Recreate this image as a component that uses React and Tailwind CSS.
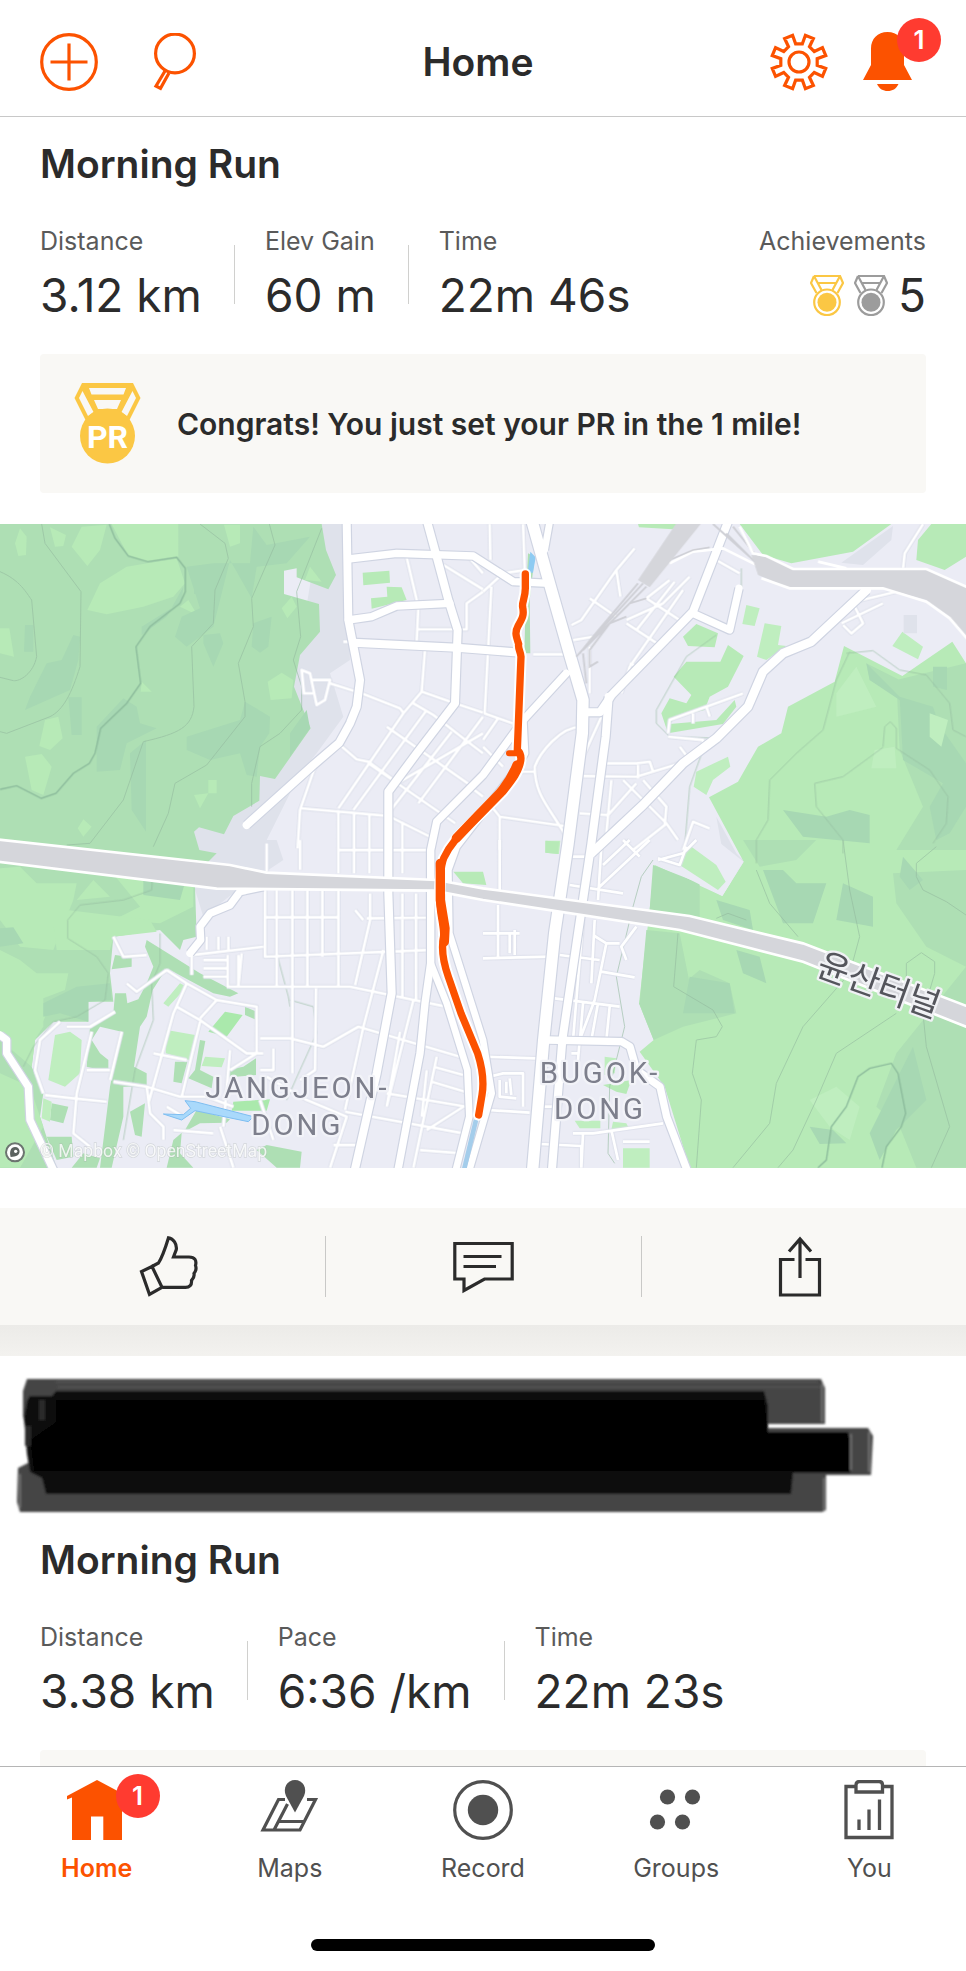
import React from "react";

/* ---------- icons ---------- */

const gearPoints = Array.from({ length: 8 }, (_, k) => {
  const a = 22.5 + 45 * k;
  return [
    [a - 12, 18.5],
    [a - 9, 27.5],
    [a + 9, 27.5],
    [a + 12, 18.5],
  ];
})
  .flat()
  .map(([deg, r]) => {
    const t = (deg * Math.PI) / 180;
    return `${(29 + r * Math.sin(t)).toFixed(2)},${(29 - r * Math.cos(t)).toFixed(2)}`;
  })
  .join(" ");

function PlusIcon() {
  return (
    <svg viewBox="0 0 58 58" className="size-[58px]" fill="none" stroke="currentColor" strokeWidth="3.200" aria-hidden="true">
      <circle cx="29" cy="29" r="27.3" />
      <path d="M29 10.500V47.500M10.500 29H47.500" />
    </svg>
  );
}

function SearchIcon() {
  return (
    <svg viewBox="0 0 58 58" className="size-[58px]" fill="none" stroke="currentColor" strokeWidth="3.200" aria-hidden="true">
      <circle cx="29" cy="20.500" r="19.400" />
      <path d="M19 38L10 53L14.500 55.300L23 40" />
    </svg>
  );
}

function GearIcon() {
  return (
    <svg viewBox="0 0 58 58" className="size-[58px]" fill="none" stroke="currentColor" strokeWidth="3.200" aria-hidden="true">
      <polygon points={gearPoints} />
      <circle cx="29" cy="29" r="10" />
    </svg>
  );
}

function BellIcon() {
  return (
    <svg viewBox="0 0 58 58" className="size-[58px] overflow-visible" fill="currentColor" aria-hidden="true">
      <path d="M29.500 -1C19.500 -1 13 6 13 15.500V32L5 47H54L46 32V15.500C46 6 39.500 -1 29.500 -1Z" />
      <path d="M19 51H40.500C38 56 34.500 58 29.700 58S21.500 56 19 51Z" />
    </svg>
  );
}

function SmallMedal() {
  return (
    <svg viewBox="0 0 34 41" className="h-[41px] w-[34px]" fill="none" stroke="currentColor" strokeWidth="2.200" aria-hidden="true">
      <path d="M4 1H30L33 8L27.500 18M4 1L1 8L6.500 18M4 1L11.500 15M30 1L22.500 15M7.500 8H26.500" />
      <circle cx="17" cy="27.300" r="12.800" />
      <circle cx="17" cy="27.300" r="9.500" fill="currentColor" stroke="none" />
    </svg>
  );
}

function PrMedal() {
  return (
    <svg viewBox="0 0 67 81" className="h-[81px] w-[67px] shrink-0" aria-label="PR medal">
      <path d="M8 0H59L66.500 15L54 40H13L0.500 15Z" fill="#fbc744" />
      <path d="M15 5H52L49.500 11.500H17.500ZM20 17H47L43 26H24ZM8.500 8L5 15L14 33L19.500 29ZM58.500 8L62 15L53 33L47.500 29Z" fill="#f9f8f5" />
      <circle cx="33.500" cy="53" r="27.500" fill="#fbc744" />
      <text x="33.500" y="65" textAnchor="middle" fontSize="32" fontWeight="700" fontFamily="'Liberation Sans Narrow', Roboto, sans-serif" fill="#fff">PR</text>
    </svg>
  );
}

function ThumbIcon() {
  return (
    <svg viewBox="0 0 60 61" className="h-[61px] w-[60px]" fill="none" stroke="currentColor" strokeWidth="3.200" aria-hidden="true">
      <path d="M14 30.500L20.500 27C25 20 28 10 30.500 1.800C35.500 2.500 39 8 38.300 13.500L35.500 21H51C57 21 58.800 24.500 57.500 29.500C58.500 32 57.500 35.500 56 37.500C56.500 40 55 43 53.500 44.500C54 49 51.500 51.300 47.500 51.300H24.500" />
      <path d="M14 30.500L3.500 35.500L11.500 58.500L24 51.300Z" />
    </svg>
  );
}

function CommentIcon() {
  return (
    <svg viewBox="0 0 61 61" className="size-[61px]" fill="none" stroke="currentColor" strokeWidth="3.200" aria-hidden="true">
      <path d="M1.800 7.500H59.200V43H31.500L11 54.500V43H1.800Z" />
      <path d="M10.500 20.500H48.500M10.500 30.500H43" />
    </svg>
  );
}

function ShareIcon() {
  return (
    <svg viewBox="0 0 60 61" className="h-[61px] w-[60px]" fill="none" stroke="currentColor" strokeWidth="3.200" aria-hidden="true">
      <path d="M24.500 23.500H10.500V59H49.500V23.500H35.500M30 3V42M19 15.500L30 3L41 15.500" />
    </svg>
  );
}

function HomeIcon() {
  return (
    <svg viewBox="0 0 60 60" className="size-[60px]" fill="currentColor" aria-hidden="true">
      <path d="M30 0L60 16V19.500L55 17.500V60H36.300V36.500H24V60H5V17.500L0 19.500V16Z" />
    </svg>
  );
}

function MapsIcon() {
  return (
    <svg viewBox="0 0 60 60" className="size-[60px]" fill="none" stroke="currentColor" strokeWidth="3.200" aria-hidden="true">
      <path d="M25 19.500H18.500L3 50H40L55.500 19.500H47M27.500 24L14 50M19 41.500H44" />
      <path d="M35 32.500L26 16C22.500 8 27 0 35 0S47.500 8 44 16Z" fill="currentColor" stroke="none" />
    </svg>
  );
}

function RecordIcon() {
  return (
    <svg viewBox="0 0 60 60" className="size-[60px]" aria-hidden="true">
      <circle cx="30" cy="30" r="28.300" fill="none" stroke="currentColor" strokeWidth="3.200" />
      <circle cx="30" cy="30" r="15.200" fill="currentColor" />
    </svg>
  );
}

function GroupsIcon() {
  return (
    <svg viewBox="0 0 60 60" className="size-[60px]" fill="currentColor" aria-hidden="true">
      <circle cx="21.500" cy="17" r="7.600" />
      <circle cx="46.500" cy="17" r="7.600" />
      <circle cx="11.500" cy="42" r="7.600" />
      <circle cx="36.500" cy="42" r="7.600" />
    </svg>
  );
}

function YouIcon() {
  return (
    <svg viewBox="0 0 60 60" className="size-[60px]" fill="none" stroke="currentColor" strokeWidth="3.300" aria-hidden="true">
      <path d="M16.500 6.500H7V57.500H53V6.500H43.500" />
      <path d="M17 12V5C17 2.500 18 1.500 20.500 1.500H40C42.500 1.500 43.500 2.500 43.500 5V12Z" />
      <path d="M20 39.500V50M30 29.500V50M40.500 19.500V50" />
    </svg>
  );
}

/* ---------- map ---------- */

const NW = "";
const NE = "translate(1449 0)";
const SW = "translate(0 960)";
const SE = "translate(1449 960)";

const MID = "#aedfb4";
const LIGHT = "#b7eab7";
const PALE = "#bfeebf";
const DARK = "#a7d8b3";
const SHADE = "#dfe2eb";

const areas = [
  [NW, SHADE, "M960 12H1030L1050 420L990 460L1030 590L950 700L900 760L800 960L600 990L560 900L760 700L880 500Z"],
  [SW, SHADE, "M560 0H830L850 60L700 160L610 230L570 100Z"],
  [NW, MID, "M0 12H965L978 90L1008 165L985 208L890 172V145L852 152V222L957 252L960 335L900 405L882 500L932 625L825 777L780 768L778 842L700 888L672 943L597 922L582 935L598 990L650 1000L610 1040L585 1100L590 1250L550 1260L540 1290L480 1230L340 1250L330 1360L340 1445H265V1505H160L105 1560L95 1640L130 1720L120 1790L170 1944H0Z"],
  [NW, LIGHT, "M335 12H535V110L440 125L385 108ZM262 270L300 190L380 140L530 115L555 190L520 230L430 260L320 283ZM60 25L80 50L78 105L55 108L45 70ZM245 20L320 14L300 90L262 138L215 80ZM150 22L198 45L190 78L165 80ZM672 14H720V70L690 80ZM0 325H28L42 410L0 400ZM75 710L125 702L155 740L130 825L95 810ZM135 600L175 590L188 655L150 690L118 678ZM330 632L362 634L358 690L325 712ZM803 485L845 458L880 480L875 535L812 540ZM845 265L875 230L890 260L862 295ZM930 140L965 185L915 180ZM625 780H650V820H625ZM582 825L625 820L600 865ZM250 898L275 920L250 950L233 925ZM540 260L565 240L592 285ZM425 485L455 515L422 515Z"],
  [NW, DARK, "M760 20L800 75L930 50L860 130L770 140L755 235L690 120L640 320L560 380L525 350L545 290L600 265L560 140L640 130L750 130ZM140 430L185 420L220 345L240 350L235 420L210 510L75 570L90 530ZM205 532H245V645L215 645ZM75 315H100V395H72ZM290 620L370 535L410 560L420 610L470 625L380 670L360 750L290 755ZM390 700L438 660V935L395 870ZM560 650L720 600L735 545L810 590L808 640L780 680L770 770L740 765L720 700L630 720L560 690ZM610 370L640 440L670 370L660 340L610 345ZM760 310L815 290L805 380L780 398L755 380ZM425 320L545 245L550 200L500 290L425 345ZM582 182H612V222H582ZM870 640L920 570L930 625L870 710Z"],
  [SW, LIGHT, "M0 85L60 80L110 130L230 130L220 180L160 330L60 320L0 240ZM0 330L60 360L110 400L205 400L195 450L130 475L130 560L70 650L0 560ZM330 90L460 120L580 140V200L480 250L340 240L420 200ZM280 120L330 170L230 180Z"],
  [SW, LIGHT, "M200 210L450 240L470 275L340 290L330 330L170 330L160 250ZM0 560L80 560L140 520L105 600L95 680L0 600ZM0 700L90 740L130 860L60 983H0Z"],
  [SW, DARK, "M130 490L230 440L330 430L335 480L265 485V545L180 520L130 530ZM0 265L40 262L70 310L0 320ZM430 100L560 110L540 180L430 165Z"],
  [SW, MID, "M440 300L600 400L715 460L690 470L640 460L500 385L458 450L440 530L420 560L402 680L440 700V740L370 740V830L335 983H300L330 740L340 690L365 575L300 560L275 600L300 640L325 660V695L260 680L270 560L340 520L345 460H378L382 490L415 478L440 430L460 380L435 320ZM345 345L395 352L395 380L335 388ZM525 665H562L545 730L520 725ZM600 600L616 603L600 690L640 710L635 745L565 715L585 690ZM735 500L770 515V540L735 525ZM680 690L730 680L768 655V705L690 712ZM155 790L205 800L190 850L150 840ZM390 815L435 790L425 890L405 885ZM555 870L590 810L690 838L680 848L600 850L545 880L540 940L580 983H500L520 900ZM800 915L905 935L900 983H830L770 930ZM140 890H215L220 950L170 960ZM250 940L300 955L290 983H215Z"],
  [SW, PALE, "M165 585L210 575L245 600L240 700L195 740L145 720ZM500 570L585 585L575 662L497 640ZM615 650L675 655L665 682L605 678ZM130 775L155 785L150 845L125 835ZM540 430L560 440L505 500L490 490Z"],
  [SW, "#aae9ac", "M675 515L728 525L680 590L625 575ZM700 785L810 778L800 812L695 812Z"],
  [NW, LIGHT, "M1088 158L1168 152L1170 188L1090 196ZM1160 200L1205 202L1220 240L1115 266L1113 235L1162 230Z"],
  [NE, LIGHT, "M770 12H1225L1110 95L925 130L840 105ZM1345 12H1449V110L1385 150L1300 120L1305 60ZM465 12H590L570 28L468 22ZM640 312L705 340L695 382L615 378L600 350ZM735 375L782 408L735 500L680 530L665 570L580 590L560 612L700 600L755 540L760 560L720 612L555 640L535 580L560 535L610 550L625 525L572 470L610 425H712Z"],
  [NE, PALE, "M790 255L830 265L815 318L778 312ZM845 310L895 318L885 375L910 378L850 420L822 410ZM1258 335L1320 380L1305 418L1228 378ZM735 710L742 740L690 780L670 825L632 800L640 755ZM188 962H232L228 1002L187 998Z"],
  [NE, SHADE, "M1100 110L1230 18L1225 60L1140 135L1075 128ZM1262 285H1302V340H1262ZM700 890L760 1000L790 1030L750 1110L720 1000Z"],
  [NW, LIGHT, "M2532 378L2707 468L2857 365L2898 430V1944H2069L1994 1700L1919 1595L1961 1560L1917 1450L1964 1035L2167 1128L2231 1025L2127 832L2214 785L2274 680L2344 640L2364 560L2504 485Z"],
  [NE, MID, "M1240 480L1449 430V990H1240L1320 860L1250 690ZM1150 430L1250 480L1245 530L1160 480Z"],
  [NE, DARK, "M1350 440H1392V510L1350 500ZM1250 530L1330 560L1449 730V860L1400 940L1360 960L1340 860L1380 790L1260 720ZM900 870L1030 890L1100 870L1160 885V970L960 950ZM1150 430L1250 530L1350 560L1370 620L1160 480Z"],
  [NE, PALE, "M1060 520L1120 440L1180 560L1060 590ZM1175 690L1235 680L1240 745L1165 745ZM1340 580L1395 600L1375 680L1340 650Z"],
  [SE, MID, "M780 0H1000L940 60L830 80ZM510 75L650 130V230L500 210ZM468 490L590 440L650 390L740 430L760 520L600 560L512 600ZM1230 100L1449 90V983H1300L1250 860L1180 800L1240 640L1449 380L1330 320L1240 190ZM490 270L590 280L620 430L470 490Z"],
  [SE, DARK, "M840 90H900L940 130L1030 130L990 250L900 250ZM1080 130L1170 170V260L1060 240ZM620 410L740 430L755 520L600 520ZM760 330L830 350L850 430L780 400ZM1160 880L1250 700L1290 620L1330 780L1240 870L1190 960ZM980 860L1050 870L1090 910L1010 912ZM700 180L800 210L810 270L720 240ZM1260 50L1320 120L1280 150L1250 110Z"],
  [SE, PALE, "M618 15L700 75L728 125L705 150L590 75ZM420 925H500V983H420ZM365 650L400 655L395 700L365 705ZM275 842H352V865H290ZM390 845L430 850L440 870L385 870ZM980 780L1060 740L1130 800L1100 900L1040 860Z"],
  [SE, LIGHT, "M187 2L228 5L225 42L187 38ZM360 735L445 720L430 762L400 755ZM-89 95H0L10 135L-60 130Z"],
  [SE, "#ebecf5", "M505 60L620 12L640 0H700L782 65L718 168ZM560 70"],
  [SE, PALE, "M618 15L700 75L728 125L705 150L590 75Z"],
  [NE, MID, "M135 100L155 110L140 240L142 400L124 400L128 250Z"],
  [NE, "#8ecbf2", "M142 95L158 112L150 158L134 158Z"],
];

const contours = [
  [NW, "M0 155C60 180 80 220 95 240L110 410C100 460 60 485 40 482L0 472M125 12L135 70L243 215L240 440C215 520 190 570 150 590L20 640L0 635M600 12L675 70L685 115L645 210L640 310L575 380L582 560C575 620 540 640 430 665L370 840L270 970L200 975M808 12L825 75L755 235L760 320L715 430L735 545V590L620 735L525 790L505 880L460 980M965 25L890 215L902 350L880 420L905 500V570L840 640L780 680L755 790L755 860"],
  [SW, "M460 80L455 150L370 180L240 195L203 240V295L290 350L325 400L315 480L230 530L160 545L100 620L70 680M480 280L480 370L455 430L460 540L405 690L370 900M830 340L865 470L870 500M870 480L940 500L950 580L900 690L860 780"],
  [NE, "M700 345L610 410L520 570L520 610L560 650L720 655M775 145V205M1090 400L1170 392L1250 450L1330 465L1400 550L1410 630L1449 650M1100 395L1060 480L1020 630L940 700L860 780L855 900L820 960V1030M1200 680L1205 620L1222 605L1240 625V685L1340 750L1395 830L1390 910L1350 970M1200 682L1080 770L995 790L1000 860L1080 960V1000M660 690L620 800L605 980"],
  [SE, "M820 90L860 190L945 290M1080 0L1100 150L1130 290L1100 400L960 560L880 730L860 850L750 983M700 235L735 220L790 240M585 280L572 440L690 510L718 560L700 590L640 600L628 700L655 780L640 983M1240 520L1060 640L1000 780L930 930L885 983M1270 420V370L1315 338L1355 365V400L1320 520L1330 620L1400 860L1345 983M1360 20L1300 70V110L1320 150L1390 185L1449 225M510 60L475 110L450 200L400 410L425 560L380 740L375 940L395 970"],
];

const ridges = [
  [NW, "M328 12L345 55L385 108L443 125L530 112L556 145V215L540 250L450 320L408 380L422 490L380 550L302 625L285 700L268 730L220 760L168 820L124 835L50 797L0 808"],
  [SE, "M1005 983L1030 960L1045 860L1090 800L1125 710L1160 685L1225 670L1245 700L1268 820L1255 860L1210 920L1197 983"],
];

const thinStreets = [
  [NW, "M1220 112L1255 260L1250 365M1255 328H1400V250L1449 215M1330 135L1449 208M1275 390L1265 515M1265 515L1365 550L1449 578M1265 515L1210 580L1015 865M1240 550L1300 585L1390 655L1449 700M1280 570L1060 870M1355 635L1180 860L1160 885M1160 620L1410 795M1105 730L1366 910M1449 590L1255 850M1200 785L1449 640M990 490L1085 520L1200 565L1210 578M1020 675L1070 718L1105 725L1195 790M945 740L900 870L893 985M905 865L1165 888L1290 950M1015 870V1060M1062 878V1060M1108 880V1060M1207 905V1060M1410 800L1449 830M1030 365H1070M1405 110L1449 160M935 480H990L975 540L950 555L930 460L905 450L912 520H940"],
  [NE, "M20 12L22 120M120 12L125 150L60 160L0 215M25 200L5 580L90 610M45 595L0 660M0 680L60 740M265 315L295 300L400 150L455 85M400 150L412 230M320 235L400 290M430 300L540 250L620 170M430 310L530 375M490 235L590 300M560 180L490 235M600 210L440 440L415 520M575 185L460 330M440 430L470 445M270 360L330 350M295 620C230 620 170 700 155 740C155 830 200 860 255 960M110 755H155M30 865L50 890L260 920M50 890V990M300 768L460 770L590 730L700 660M370 730H460L500 725L510 755M465 735V775M420 780L550 910L585 960M480 780L550 860L545 915L450 990M385 780L370 940M290 880L375 885L460 790M555 640L560 600L780 520M555 650L660 660V680M590 680L620 720M630 580V610M670 560L680 590M1075 310L1200 250M1115 260L1140 310L1105 340L1080 315M1115 245L1240 215M600 990L630 905L680 925M1320 12L1265 100L1260 145M305 700L355 590M770 160L700 120M150 403H250M320 380V520"],
  [SW, "M1015 30H1290M900 0V90M800 95V10M795 150V350L1280 330M830 150V440M877 150V700M922 150V440M967 150V350M1015 150L1015 440M1110 160V240L1065 435M1100 235L1280 233M795 232H1015M1065 210L1090 240M1207 160V470M1248 160V480M1150 330L1090 560L1035 810M680 440H1050L1330 498M575 345L790 320M575 345V405M683 345V440M715 345V440M725 340L715 440M610 360H680M610 385H680M610 410H680M948 445L945 690L900 720M870 595L970 620L1075 560L1380 650M780 595H870M1240 480L1160 800M1200 575L1160 800M1310 650L1240 983M1300 680L1390 705M1295 725L1395 755M1160 760L1400 800M1035 815L1390 880M1280 870L1390 800M1260 930L1385 940M1000 915L1080 915M920 780L1040 830L990 983M800 710L920 780M1280 690L1265 830M500 390L410 455L380 430M500 390L560 430L650 480L770 500V640L690 690M560 430L520 520L445 790M530 500L600 540L740 640H790M600 545L545 770M650 480L600 535M460 640L560 660M690 630L670 860M275 575L230 760L220 880L270 920M200 560H270L345 515M340 725L440 740L540 770H620L700 800M135 765L220 775L320 785M365 575L330 720M260 690H330M440 740L450 820L490 860V900M500 800L550 830M660 860L700 983M520 870L640 880M780 780L820 900M180 545L120 600L105 690L130 760M820 625V690H780M340 290L370 350L440 345M620 290V330M655 290V330M685 290V330"],
  [SE, "M50 0V150M45 195V350M0 355L200 350M0 650L160 655M15 810L140 818M0 280H110M80 280V340M95 270V345M265 50H320M355 20L345 180M260 135L420 160M345 145L500 0M360 75L440 0M420 0L470 50M525 60L600 40L640 0M525 55L590 75L610 20M335 240L325 430M230 345L350 360M330 285L370 310H410M370 310L335 480L290 600L280 720M460 260L415 320L430 360M355 395L455 412M215 475L410 500M300 490L290 610M345 490L325 600M380 500L370 600M300 240L270 600M265 640H290M270 880H330L540 850M170 912L295 918V983M385 870L405 960M420 905H500M300 880L295 983M180 800H230M20 710L60 700H120V800M50 720V770L100 775M70 725V760M80 715L85 765"],
];

const roads = [
  [24, "M1040 0L1045 300L1080 480L1070 560L1050 610L1018 668L940 735L740 915"],
  [24, "M1280 0L1310 110L1345 240L1373 330L1365 550L1250 700L1165 815V1120L1175 1420L1130 1660L1062 1960"],
  [22, "M1045 117L1190 100L1420 108L1540 185L1650 190"],
  [22, "M1045 300L1115 290L1190 258L1350 250"],
  [24, "M1060 368L1370 383L1560 398"],
  [22, "M1699 460L1570 600L1449 765L1310 905L1292 990V1330L1275 1450L1260 1600L1192 1960"],
  [20, "M1292 1330L1340 1450L1402 1650L1408 1790L1365 1960"],
  [20, "M1570 600L1575 700L1540 760L1370 980L1345 1050L1348 1240L1449 1560L1475 1720L1405 1960"],
  [34, "M1595 0L1654 210L1711 410L1749 540L1747 640L1704 972L1664 1240L1631 1560L1597 1960"],
  [20, "M1650 0L1634 90"],
  [24, "M1826 530L1817 650L1774 972L1734 1240L1687 1560L1655 1960"],
  [24, "M2186 0L2079 275L1835 525L1800 577H1750"],
  [22, "M2079 280L2189 330L2217 205"],
  [26, "M2600 210L2434 365L2349 400L2289 455L2244 560L2149 655L2049 730L1929 855L1774 1000"],
  [22, "M790 1100L720 1115L690 1155L630 1180L600 1220L602 1260L570 1300"],
  [22, "M0 1545L20 1560V1600L85 1700L90 1800L165 1960"],
  [22, "M1640 1560L1865 1565L1890 1580L1910 1650L1980 1700L2000 1790L2065 1960"],
];

const route =
  "M127 162V205C127 235 116 245 119 262C124 285 118 295 105 318C94 338 100 350 107 372C104 385 113 395 114 410L103 690C112 698 116 712 112 728C106 755 92 775 60 815L-20 895C-60 935 -95 965 -118 1015C-128 1040 -130 1090 -130 1140C-128 1190 -116 1220 -118 1250C-126 1285 -118 1330 -104 1370L-66 1480L-16 1600C0 1650 3 1690 -3 1725L-13 1785";

function RouteMap() {
  return (
    <svg viewBox="0 12 2898 1932" className="block w-full" role="img" aria-label="Route map of Morning Run" fontFamily="Roboto, 'Noto Sans CJK KR', sans-serif">
      <rect y="0" width="2898" height="1960" fill="#ebecf5" />
      {areas.map(([t, fill, d], i) => (
        <path key={i} transform={t || undefined} fill={fill} d={d} />
      ))}
      <g fill="none" stroke="#94ba9f" strokeWidth="3" opacity="0.600">
        {contours.map(([t, d], i) => (
          <path key={i} transform={t || undefined} d={d} />
        ))}
      </g>
      <g fill="none" stroke="#8bba9b" strokeWidth="4">
        {ridges.map(([t, d], i) => (
          <path key={i} transform={t || undefined} d={d} />
        ))}
      </g>
      <g fill="none" strokeLinejoin="round">
        {thinStreets.map(([t, d], i) => (
          <path key={i} transform={t || undefined} d={d} stroke="#dcdfea" strokeWidth="13" />
        ))}
        {thinStreets.map(([t, d], i) => (
          <path key={i} transform={t || undefined} d={d} stroke="#fff" strokeWidth="8" />
        ))}
        {roads.map(([w, d], i) => (
          <path key={i} d={d} stroke="#cfd4e2" strokeWidth={w + 7} />
        ))}
        {roads.map(([w, d], i) => (
          <path key={i} d={d} stroke="#fff" strokeWidth={w} strokeLinecap="round" />
        ))}
      </g>
      {/* water */}
      <path transform={SW} d="M555 782L585 785L760 830L745 845L585 812L545 840L490 822L550 824L572 805Z" fill="#a9d9fb" stroke="#7dbdf0" strokeWidth="3" />
      <path transform={SW} d="M1428 840L1392 990" fill="none" stroke="#a4cdeb" strokeWidth="14" />
      {/* rail yards and motorway */}
      <g transform={NE}>
        <path d="M480 190L280 410M490 200L300 390M465 190L330 350L290 400M300 400L310 490M430 290L380 310L320 390V440L345 425M490 235L440 250M730 40L820 130M750 20L830 120M690 12L800 110" fill="none" stroke="#cfd0d6" strokeWidth="6" />
        <path d="M560 130L630 95L720 85L830 140" fill="none" stroke="#fff" strokeWidth="8" />
        <path d="M560 120L630 90L680 82" fill="none" stroke="#cfd0d6" strokeWidth="5" />
        <path d="M580 10H655L500 202L465 180Z" fill="#d5d6db" />
        <path d="M805 105L850 110L930 145H1330L1460 205V360L1400 290L1330 240L1200 205H920L825 165Z" fill="#d5d6db" />
        <path d="M770 20L810 100L850 108L930 147H1330L1460 205M835 175L920 205H1200L1330 245L1400 295L1460 365M1005 125L1090 145" fill="none" stroke="#fff" strokeWidth="8" />
      </g>
      <path d="M-10 958L690 1035L800 1058L1310 1080L1449 1105L2069 1188L2409 1270L2910 1462V1525L2409 1325L2039 1230L1449 1140L1300 1112L650 1106L-10 1025Z" fill="#d5d6db" stroke="#fff" strokeWidth="8" />
      {/* recorded route */}
      <g transform={NE} fill="none" strokeLinecap="round" strokeLinejoin="round">
        <path d={route} stroke="#fff" strokeWidth="34" />
        <path d={route} stroke="#fc5200" strokeWidth="22" />
        <path d="M78 700H103" stroke="#fc5200" strokeWidth="18" />
        <path d="M102 735C88 770 75 790 50 820L-25 897L-80 955M-128 1030V1140L-114 1225L-116 1265" stroke="#fc5200" strokeWidth="28" />
      </g>
      {/* place names */}
      <g className="tracking-widest" fontSize="88" fill="#7d7f8c" stroke="#f2f3f8" strokeWidth="14" strokeLinejoin="round" paintOrder="stroke" textAnchor="middle">
        <text x="892" y="1734">JANGJEON-</text>
        <text x="892" y="1844">DONG</text>
        <text x="1800" y="1688">BUGOK-</text>
        <text x="1800" y="1798">DONG</text>
      </g>
      <text transform="translate(2624 1430) rotate(20)" fontSize="104" fill="#54555c" stroke="#f0f1f5" strokeWidth="14" strokeLinejoin="round" paintOrder="stroke" textAnchor="middle">
        윤산터널
      </text>
      <circle cx="45" cy="1897" r="27" fill="#fff" stroke="#6c7470" strokeWidth="6" />
      <path d="M32 1911C27 1892 34 1880 46 1881C60 1882 63 1899 53 1906C47 1910 40 1911 32 1911Z" fill="#5c6360" />
      <circle cx="47" cy="1894" r="5" fill="#fff" />
      <text x="120" y="1911" fontSize="53" fill="#fff" fillOpacity="0.800" stroke="#a5b0ab" strokeOpacity="0.350" strokeWidth="4" paintOrder="stroke">© Mapbox © OpenStreetMap</text>
    </svg>
  );
}

/* ---------- feed ---------- */

function Badge({ children }) {
  return (
    <span className="absolute -top-1.5 left-[49px] flex size-11 items-center justify-center rounded-full bg-[#ff3b30] text-[26px] leading-8 font-semibold text-white">
      {children}
    </span>
  );
}

function Stats({ items, children }) {
  return (
    <div className="mt-[37px] flex items-start justify-between">
      <dl className="flex items-center">
        {items.map(([label, value], i) => (
          <React.Fragment key={label}>
            {i > 0 && <div className="mr-[30px] ml-8 h-[59px] w-px bg-[#d0d0ce]" />}
            <div>
              <dt className="text-[25px] leading-8 text-[#5a5a5a]">{label}</dt>
              <dd className="mt-2.5 text-[46px] leading-[56px] text-[#2b2b2b]">{value}</dd>
            </div>
          </React.Fragment>
        ))}
      </dl>
      {children}
    </div>
  );
}

function Title({ children }) {
  return <h2 className="text-[39px] leading-12 font-semibold text-[#2b2b2b]">{children}</h2>;
}

function Scribble() {
  return (
    <svg viewBox="0 0 966 180" className="block w-full" role="img" aria-label="Hidden athlete">
      <defs>
        <filter id="soft" x="-2%" y="-10%" width="104%" height="120%">
          <feGaussianBlur stdDeviation="1.300" />
        </filter>
      </defs>
      <g filter="url(#soft)">
        <path d="M27 23H821L825 32V68H768V72H868L873 80L871 119H826V154L822 156H20L17 146L18 112L30 106L26 72L23 60V35Z" fill="#444" />
        <path d="M56 26H818M58 31H820" stroke="#535353" strokeWidth="2" />
        <path d="M27 45L30 40H52L56 35H764L768 50V76H848L852 90L850 117H793L791 138H46L42 122L30 116L27 98L24 62Z" fill="#111" />
        <path d="M56 44H764L768 76H848V115H34L30 84L56 66Z" fill="#020202" />
        <path d="M42 44V64M28 70V90" stroke="#2c2c2c" strokeWidth="6" />
        <path d="M20 118V152M822 28V66M824 122V154M869 76V116M851 78V114" stroke="#6e6e6e" strokeWidth="2" />
      </g>
    </svg>
  );
}

const tabs = [
  ["Home", HomeIcon],
  ["Maps", MapsIcon],
  ["Record", RecordIcon],
  ["Groups", GroupsIcon],
  ["You", YouIcon],
];

const actions = [
  ["Give kudos", ThumbIcon],
  ["Comment", CommentIcon],
  ["Share", ShareIcon],
];

export default function App() {
  return (
    <div className="flex h-screen flex-col bg-white font-[Inter,sans-serif] text-[#2b2b2b]">
      <header className="grid shrink-0 grid-cols-[1fr_auto_1fr] items-center border-b border-[#c8c8c8] pt-[33px] pr-[50px] pb-[25px] pl-10 text-[#fc5200]">
        <div className="flex gap-12">
          <button aria-label="Add"><PlusIcon /></button>
          <button aria-label="Search"><SearchIcon /></button>
        </div>
        <h1 className="text-[39px] leading-12 font-semibold text-[#2b2b2b]">Home</h1>
        <div className="flex justify-end gap-[30px]">
          <button aria-label="Settings"><GearIcon /></button>
          <button aria-label="Notifications" className="relative">
            <BellIcon />
            <span className="absolute -top-[15px] left-[39px] flex size-11 items-center justify-center rounded-full bg-[#ff3b30] text-[26px] leading-8 font-semibold text-white">
              1
            </span>
          </button>
        </div>
      </header>

      <main className="min-h-0 flex-1 overflow-y-auto [scrollbar-width:none]">
        <article>
          <div className="px-10 pt-[23px] pb-[31px]">
            <Title>Morning Run</Title>
            <Stats items={[["Distance", "3.12 km"], ["Elev Gain", "60 m"], ["Time", "22m 46s"]]}>
              <div className="text-right">
                <div className="text-[25px] leading-8 text-[#5a5a5a]">Achievements</div>
                <div className="mt-2.5 flex items-center justify-end gap-2.5 text-[46px] leading-[56px]">
                  <span className="text-[#fbc744]"><SmallMedal /></span>
                  <span className="text-[#9c9c9c]"><SmallMedal /></span>
                  <span>5</span>
                </div>
              </div>
            </Stats>
            <div className="mt-[31px] flex items-center gap-9 rounded-sm bg-[#f9f8f5] px-[34px] py-[29px]">
              <PrMedal />
              <p className="text-[30px] leading-10 font-semibold">Congrats! You just set your PR in the 1 mile!</p>
            </div>
          </div>
          <RouteMap />
          <div className="mt-10 grid grid-cols-3 bg-[#f9f8f5] px-2 py-7">
            {actions.map(([label, Icon], i) => (
              <button key={label} aria-label={label} className={i ? "flex justify-center border-l border-[#c9c9c7]" : "flex justify-center pl-1"}>
                <Icon />
              </button>
            ))}
          </div>
          <div className="h-[31px] bg-linear-to-b from-[#ecebe8] to-[#f3f2ef]" />
        </article>

        <article>
          <Scribble />
          <div className="px-10">
            <Title>Morning Run</Title>
            <Stats items={[["Distance", "3.38 km"], ["Pace", "6:36 /km"], ["Time", "22m 23s"]]} />
            <div className="mt-[31px] h-[139px] rounded-sm bg-[#f9f8f5]" />
          </div>
        </article>
      </main>

      <nav className="shrink-0 border-t border-[#b5b5b5] bg-white pb-5">
        <ul className="grid grid-cols-5">
          {tabs.map(([label, Icon], i) => (
            <li key={label}>
              <a href={"#" + label.toLowerCase()} className={i === 0 ? "flex flex-col items-center gap-3 pt-[13px] font-semibold text-[#fc5200]" : "flex flex-col items-center gap-3 pt-[13px] text-[#505050]"}>
                <span className="relative">
                  <Icon />
                  {i === 0 && <Badge>1</Badge>}
                </span>
                <span className="text-[25px] leading-8">{label}</span>
              </a>
            </li>
          ))}
        </ul>
        <div className="mx-auto mt-[55px] h-3 w-[344px] rounded-full bg-black" />
      </nav>
    </div>
  );
}
